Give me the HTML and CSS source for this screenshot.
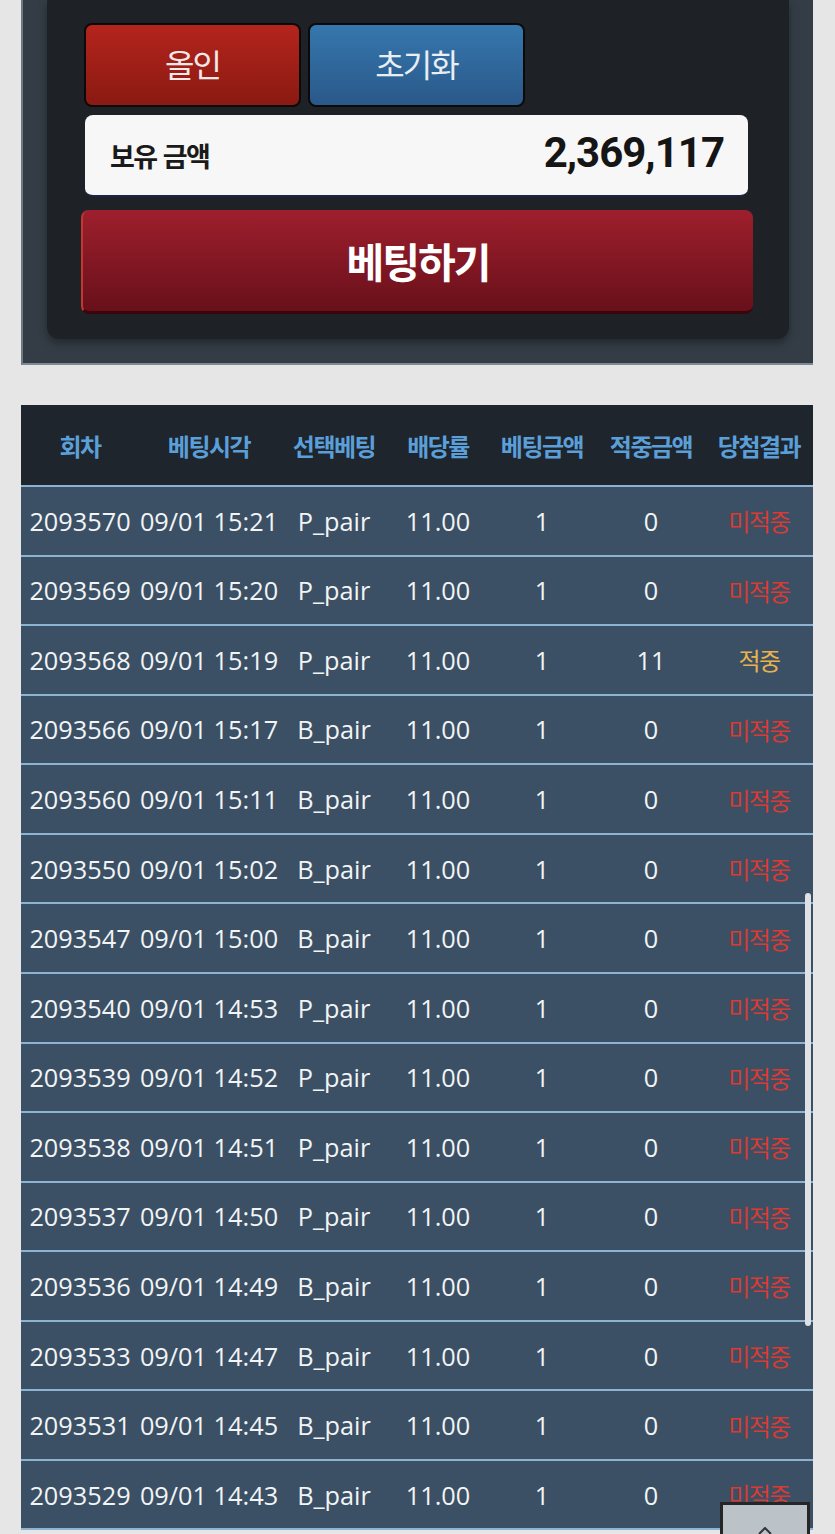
FILE: index.html
```html
<!DOCTYPE html>
<html lang="ko">
<head>
<meta charset="utf-8">
<title>베팅</title>
<link rel="stylesheet" href="styles.css">
</head>
<body>
<div class="page">
  <section class="outer">
    <div class="inner">
      <div class="btn-row">
        <button class="btn btn-red">올인</button>
        <button class="btn btn-blue">초기화</button>
      </div>
      <div class="balance">
        <span class="balance-label">보유 금액</span>
        <span class="balance-value">2,369,117</span>
      </div>
      <button class="bet-btn">베팅하기</button>
    </div>
  </section>

  <table class="history">
    <colgroup>
      <col class="c1"><col class="c2"><col class="c3"><col class="c4"><col class="c5"><col class="c6"><col class="c7">
    </colgroup>
    <thead>
      <tr><th>회차</th><th>베팅시각</th><th>선택베팅</th><th>배당률</th><th>베팅금액</th><th>적중금액</th><th>당첨결과</th></tr>
    </thead>
    <tbody>
      <tr><td>2093570</td><td>09/01 15:21</td><td>P_pair</td><td>11.00</td><td>1</td><td>0</td><td class="lose">미적중</td></tr>
      <tr><td>2093569</td><td>09/01 15:20</td><td>P_pair</td><td>11.00</td><td>1</td><td>0</td><td class="lose">미적중</td></tr>
      <tr><td>2093568</td><td>09/01 15:19</td><td>P_pair</td><td>11.00</td><td>1</td><td>11</td><td class="win">적중</td></tr>
      <tr><td>2093566</td><td>09/01 15:17</td><td>B_pair</td><td>11.00</td><td>1</td><td>0</td><td class="lose">미적중</td></tr>
      <tr><td>2093560</td><td>09/01 15:11</td><td>B_pair</td><td>11.00</td><td>1</td><td>0</td><td class="lose">미적중</td></tr>
      <tr><td>2093550</td><td>09/01 15:02</td><td>B_pair</td><td>11.00</td><td>1</td><td>0</td><td class="lose">미적중</td></tr>
      <tr><td>2093547</td><td>09/01 15:00</td><td>B_pair</td><td>11.00</td><td>1</td><td>0</td><td class="lose">미적중</td></tr>
      <tr><td>2093540</td><td>09/01 14:53</td><td>P_pair</td><td>11.00</td><td>1</td><td>0</td><td class="lose">미적중</td></tr>
      <tr><td>2093539</td><td>09/01 14:52</td><td>P_pair</td><td>11.00</td><td>1</td><td>0</td><td class="lose">미적중</td></tr>
      <tr><td>2093538</td><td>09/01 14:51</td><td>P_pair</td><td>11.00</td><td>1</td><td>0</td><td class="lose">미적중</td></tr>
      <tr><td>2093537</td><td>09/01 14:50</td><td>P_pair</td><td>11.00</td><td>1</td><td>0</td><td class="lose">미적중</td></tr>
      <tr><td>2093536</td><td>09/01 14:49</td><td>B_pair</td><td>11.00</td><td>1</td><td>0</td><td class="lose">미적중</td></tr>
      <tr><td>2093533</td><td>09/01 14:47</td><td>B_pair</td><td>11.00</td><td>1</td><td>0</td><td class="lose">미적중</td></tr>
      <tr><td>2093531</td><td>09/01 14:45</td><td>B_pair</td><td>11.00</td><td>1</td><td>0</td><td class="lose">미적중</td></tr>
      <tr><td>2093529</td><td>09/01 14:43</td><td>B_pair</td><td>11.00</td><td>1</td><td>0</td><td class="lose">미적중</td></tr>
    </tbody>
  </table>
</div>

<div class="scrollbar"></div>
<button class="to-top" aria-label="맨 위로">
  <svg width="14" height="8" viewBox="0 0 14 8"><path d="M1 7 L7 1 L13 7" fill="none" stroke="#333" stroke-width="2"/></svg>
</button>
</body>
</html>
```

FILE: styles.css
```css
* { box-sizing: border-box; }
html, body {
  margin: 0;
  padding: 0;
  background: #e6e6e6;
  font-family: "Open Sans", "Noto Sans CJK KR", sans-serif;
}
.page {
  padding: 0 22px 0 21px;
  overflow: hidden;
  height: 1534px;
}
.outer {
  background: #343d45;
  border-left: 2px solid #6e7984;
  border-bottom: 2px solid #7d8a96;
  padding: 0 24px 24px 24px;
}
.inner {
  background: #1e2226;
  border-radius: 0 0 12px 12px;
  box-shadow: 0 4px 8px rgba(0, 0, 0, 0.35);
  padding: 23px 36px 25px 34px;
}
.btn-row {
  display: flex;
  gap: 7px;
  padding-left: 3px;
}
.btn {
  width: 217px;
  height: 84px;
  border: 2px solid #0a0a0a;
  border-radius: 8px;
  color: #f3e9e9;
  font-family: "Noto Sans CJK KR", sans-serif;
  font-size: 32px;
  letter-spacing: -2px;
  padding: 0 0 4px 0;
}
.btn-red { background: linear-gradient(#b4241c, #8a1a12); }
.btn-blue { background: linear-gradient(#3577ad, #2a5889); color: #e9eef3; }
.balance {
  margin: 8px 5px 0 4px;
  height: 82px;
  background: #f7f7f7;
  border-radius: 8px;
  border-bottom: 2px solid #1b2346;
  display: flex;
  align-items: center;
  justify-content: space-between;
  padding: 0 24px 0 25px;
}
.balance-label {
  font-family: "Noto Sans CJK KR", sans-serif;
  font-weight: 700;
  font-size: 27px;
  letter-spacing: -1.5px;
  color: #1a1a1a;
}
.balance-value {
  font-family: Roboto, sans-serif;
  font-weight: 700;
  font-size: 42px;
  letter-spacing: -1px;
  color: #151515;
  margin-top: -6px;
}
.bet-btn {
  display: block;
  margin-top: 13px;
  width: 672px;
  height: 104px;
  border: none;
  border-left: 2px solid #c3372f;
  border-bottom: 3px solid #3b060b;
  border-radius: 8px;
  background: linear-gradient(#9e1f2d, #68101a);
  color: #ffffff;
  font-family: "Noto Sans CJK KR", sans-serif;
  font-weight: 700;
  font-size: 41px;
  letter-spacing: -2px;
  padding: 0 0 2px 0;
}
.history {
  margin-top: 40px;
  width: 792px;
  border-collapse: separate;
  border-spacing: 0;
  table-layout: fixed;
  background: #3b5064;
}
.c1 { width: 118px; }
.c2 { width: 140px; }
.c3 { width: 110px; }
.c4 { width: 98px; }
.c5 { width: 110px; }
.c6 { width: 108px; }
.c7 { width: 108px; }
.history th {
  background: #1e252c;
  height: 82px;
  border-bottom: 2px solid #8cb3d2;
  color: #5b9fd9;
  font-family: "Noto Sans CJK KR", sans-serif;
  font-weight: 700;
  font-size: 24px;
  letter-spacing: -1.5px;
  padding: 0;
  white-space: nowrap;
  vertical-align: middle;
}
.history td {
  height: 69.57px;
  border-bottom: 2px solid #8cb3d2;
  color: #f2f4f6;
  font-size: 25.3px;
  text-align: center;
  vertical-align: middle;
  padding: 0;
  white-space: nowrap;
}
.history td.lose {
  color: #d93a33;
  font-family: "Noto Sans CJK KR", sans-serif;
  font-size: 24px;
  letter-spacing: -1.5px;
}
.history td.win {
  color: #e9b24c;
  font-family: "Noto Sans CJK KR", sans-serif;
  font-size: 24px;
  letter-spacing: -1.5px;
}
.scrollbar {
  position: fixed;
  left: 805px;
  top: 893px;
  width: 6px;
  height: 433px;
  border-radius: 3px;
  background: #dfe2e5;
}
.to-top {
  position: fixed;
  left: 720px;
  top: 1502px;
  width: 90px;
  height: 50px;
  background: #bcc3c8;
  border: 3px solid #262626;
  padding: 22px 0 0 0;
  display: flex;
  justify-content: center;
  align-items: flex-start;
}
```
